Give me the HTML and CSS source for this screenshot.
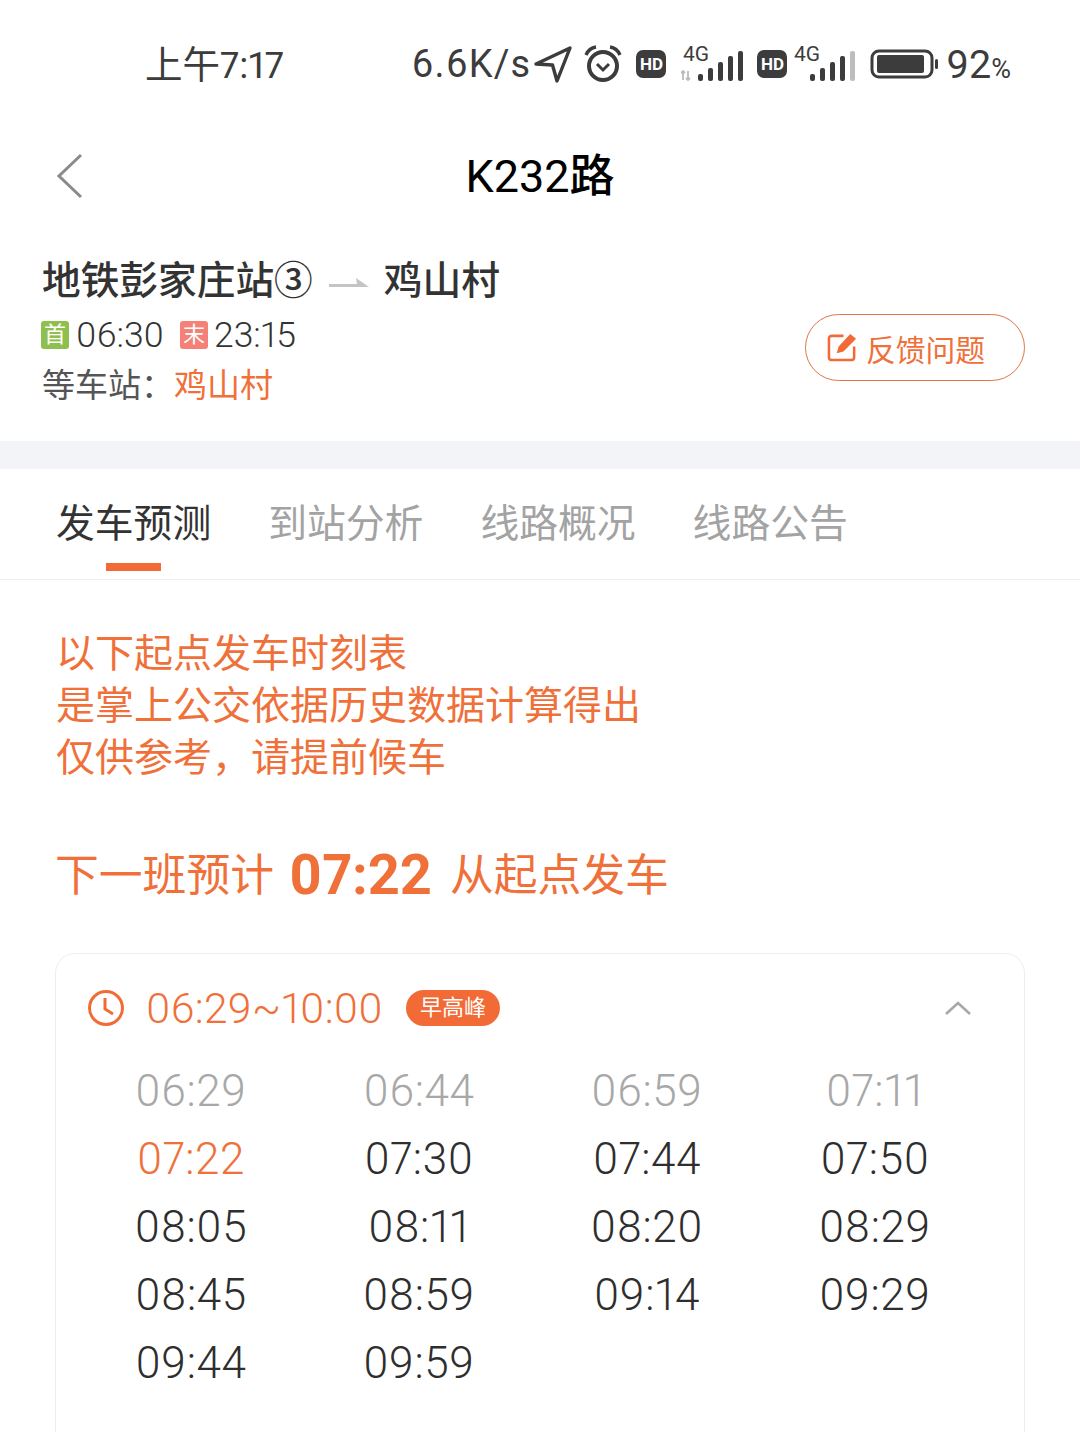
FILE: index.html
```html
<!DOCTYPE html>
<html lang="zh-CN">
<head>
    <meta charset="UTF-8">
    <meta name="viewport" content="width=device-width, initial-scale=1.0">
    <title>K232路</title>
    <link rel="stylesheet" href="styles.css">
</head>
<body>
    <div class="page">
        <div class="status-bar">
            <span class="clock">上午7:17</span>
            <div class="status-right">
                <span class="speed">6.6K/s</span>
                <svg class="ic-nav" width="40" height="40" viewBox="0 0 40 40"><path d="M3 20 L37 4 L24 37 L19.5 21 Z" fill="none" stroke="#3c3c3c" stroke-width="3.4" stroke-linejoin="round"/></svg>
                <svg class="ic-alarm" width="40" height="40" viewBox="0 0 40 40"><circle cx="20" cy="22" r="14" fill="none" stroke="#3c3c3c" stroke-width="4"/><path d="M14 20 L20 26 L26 20" fill="none" stroke="#3c3c3c" stroke-width="3"/><path d="M3 11 Q6 4 13 3 M37 11 Q34 4 27 3" fill="none" stroke="#3c3c3c" stroke-width="3.4"/></svg>
                <span class="hd hd-first">HD</span>
                <svg class="ic-signal" width="66" height="48" viewBox="0 -6 66 48"><text x="2" y="15" class="sig-text">4G</text><path d="M2 34 V25 M0 27 L2 25 L4 27 M7 25 V34 M5 32 L7 34 L9 32" stroke="#bbb" stroke-width="1.8" fill="none"/><rect x="17" y="28" width="5" height="7" rx="2" fill="#3c3c3c"/><rect x="27" y="22" width="5" height="13" rx="2" fill="#3c3c3c"/><rect x="37" y="16" width="5" height="19" rx="2" fill="#3c3c3c"/><rect x="47" y="10" width="5" height="25" rx="2" fill="#3c3c3c"/><rect x="57" y="5" width="5" height="30" rx="2" fill="#3c3c3c"/></svg>
                <span class="hd hd-second">HD</span>
                <svg class="ic-signal" width="62" height="48" viewBox="0 -6 62 48"><text x="0" y="15" class="sig-text">4G</text><rect x="16" y="28" width="5" height="7" rx="2" fill="#3c3c3c"/><rect x="26" y="22" width="5" height="13" rx="2" fill="#3c3c3c"/><rect x="36" y="16" width="5" height="19" rx="2" fill="#3c3c3c"/><rect x="46" y="10" width="5" height="25" rx="2" fill="#3c3c3c"/><rect x="56" y="5" width="5" height="30" rx="2" fill="#bdbdbd"/></svg>
                <svg class="ic-battery" width="70" height="32" viewBox="0 0 70 32"><rect x="2" y="3" width="60" height="26" rx="7" fill="none" stroke="#3c3c3c" stroke-width="3"/><rect x="7" y="7" width="47" height="18" rx="2" fill="#3c3c3c"/><rect x="65" y="11" width="3" height="10" rx="1.5" fill="#3c3c3c"/></svg>
                <span class="battery">92<small>%</small></span>
            </div>
        </div>

        <div class="nav-bar">
            <svg class="back" width="28" height="46" viewBox="0 0 28 46"><path d="M25 2 L3 23 L25 44" fill="none" stroke="#8a8a8a" stroke-width="3"/></svg>
            <h1>K232路</h1>
        </div>

        <div class="line-info">
            <div class="line-left">
                <div class="route">
                    <span>地铁彭家庄站③</span>
                    <svg class="route-arrow" width="42" height="14" viewBox="0 0 42 14"><path d="M1 11 H41 L28 2 L29 8 H1 Z" fill="#c4c4c4"/></svg>
                    <span>鸡山村</span>
                </div>
                <div class="times">
                    <span class="tag tag-first">首</span><span class="time">06:30</span>
                    <span class="tag tag-last">末</span><span class="time">23:15</span>
                </div>
                <div class="wait">等车站：<em>鸡山村</em></div>
            </div>
            <div class="feedback">
                <svg width="31" height="31" viewBox="0 0 32 32"><path d="M17 4 H5 Q2 4 2 7 V26 Q2 29 5 29 H25 Q28 29 28 26 V15" fill="none" stroke="#f26b36" stroke-width="2.6"/><path d="M10 22 L12 15 L24 2 L30 7 L17 20 Z" fill="#f26b36"/></svg>
                <span>反馈问题</span>
            </div>
        </div>

        <div class="divider"></div>

        <div class="tabs">
            <div class="tab active">发车预测</div>
            <div class="tab">到站分析</div>
            <div class="tab">线路概况</div>
            <div class="tab">线路公告</div>
        </div>

        <div class="content">
            <p class="notice">以下起点发车时刻表<br>是掌上公交依据历史数据计算得出<br>仅供参考，请提前候车</p>
            <div class="next">下一班预计<b>07:22</b>从起点发车</div>

            <div class="card">
                <div class="card-head">
                    <svg width="38" height="38" viewBox="0 0 38 38"><circle cx="19" cy="19" r="16.5" fill="none" stroke="#f26b36" stroke-width="3"/><path d="M18 9 V20 L26 25" fill="none" stroke="#f26b36" stroke-width="3"/></svg>
                    <span class="range">06:29~10:00</span>
                    <span class="peak">早高峰</span>
                    <svg class="fold" width="28" height="16" viewBox="0 0 28 16"><path d="M2 14 L14 3 L26 14" fill="none" stroke="#a8a8a8" stroke-width="2.6"/></svg>
                </div>
                <div class="grid">
                    <span class="past">06:29</span><span class="past">06:44</span><span class="past">06:59</span><span class="past">07:11</span>
                    <span class="now">07:22</span><span>07:30</span><span>07:44</span><span>07:50</span>
                    <span>08:05</span><span>08:11</span><span>08:20</span><span>08:29</span>
                    <span>08:45</span><span>08:59</span><span>09:14</span><span>09:29</span>
                    <span>09:44</span><span>09:59</span>
                </div>
            </div>
        </div>
    </div>
</body>
</html>
```

FILE: styles.css
```css
html, body {
    margin: 0;
    padding: 0;
    background-color: #ffffff;
}
.page {
    width: 1080px;
    height: 1432px;
    overflow: hidden;
    font-family: Roboto, "Noto Sans CJK SC", sans-serif;
    font-variant-numeric: proportional-nums;
    color: #333333;
}
.status-bar {
    height: 128px;
    display: flex;
    align-items: center;
    padding: 0 69px 0 145px;
    color: #3c3c3c;
    box-sizing: border-box;
}
.clock {
    font-size: 37.5px;
    margin-bottom: 6px;
}
.status-right {
    margin-left: auto;
    display: flex;
    align-items: center;
}
.speed {
    font-size: 38px;
    letter-spacing: 1.2px;
}
.battery {
    font-size: 39.5px;
    margin-left: 6px;
}
.battery small {
    font-size: 27px;
}
.ic-nav {
    margin-left: 2px;
}
.ic-alarm {
    margin-left: 10px;
}
.hd {
    width: 30px;
    height: 28px;
    border-radius: 7px;
    background-color: #3c3c3c;
    color: #ffffff;
    font-size: 17px;
    font-weight: 700;
    line-height: 28px;
    text-align: center;
}
.hd-first {
    margin-left: 13px;
}
.hd-second {
    margin-left: 10px;
}
.ic-signal {
    margin-left: 15px;
}
.hd-second + .ic-signal {
    margin-left: 7px;
}
.sig-text {
    font-family: Roboto, sans-serif;
    font-size: 21px;
    fill: #3c3c3c;
}
.ic-battery {
    margin-left: 14px;
}
.nav-bar {
    height: 96px;
    display: flex;
    align-items: center;
    justify-content: center;
    position: relative;
}
.nav-bar h1 {
    margin: 0 0 8px;
    font-size: 45px;
    font-weight: 450;
    color: #000000;
}
.back {
    position: absolute;
    left: 56px;
    top: 25px;
}
.line-info {
    height: 217px;
    padding: 34px 55px 0 42px;
    box-sizing: border-box;
    display: flex;
    justify-content: space-between;
}
.route {
    display: flex;
    align-items: center;
    font-size: 38.7px;
    line-height: 46px;
    font-weight: 500;
    color: #333333;
}
.route-arrow {
    margin: 4px 14px 0 15px;
}
.times {
    display: flex;
    align-items: center;
    margin-top: 7px;
    margin-left: -1px;
    font-size: 35.5px;
    font-weight: 300;
    line-height: 48px;
    color: #333333;
}
.tag {
    width: 28px;
    height: 28px;
    border-radius: 3px;
    color: #ffffff;
    font-size: 22px;
    font-weight: 400;
    line-height: 28px;
    text-align: center;
    margin-right: 7px;
}
.tag-first {
    background-color: #8fbf4d;
}
.tag-last {
    background-color: #f58078;
    margin-left: 16px;
    margin-right: 6px;
}
.wait {
    margin-top: 4px;
    font-size: 33px;
    line-height: 46px;
    color: #555555;
}
.wait em {
    font-style: normal;
    color: #ef7038;
}
.feedback {
    width: 220px;
    height: 67px;
    margin-top: 56px;
    padding-right: 18px;
    border: 1px solid #e0764a;
    border-radius: 34px;
    box-sizing: border-box;
    display: flex;
    align-items: center;
    justify-content: center;
    gap: 8px;
    font-size: 29.8px;
    color: #ef7038;
}
.divider {
    height: 28px;
    background-color: #f3f4f8;
}
.tabs {
    height: 111px;
    padding: 0 56px;
    box-sizing: border-box;
    display: flex;
    gap: 57px;
    border-bottom: 1px solid #eeeeee;
}
.tab {
    position: relative;
    font-size: 38.8px;
    line-height: 110px;
    color: #a3a3a3;
}
.tab.active {
    color: #333333;
}
.tab.active::after {
    content: "";
    position: absolute;
    left: 50px;
    bottom: 8px;
    width: 55px;
    height: 8px;
    background-color: #f26b36;
}
.content {
    padding: 48px 55px 0;
}
.notice {
    margin: 0 0 0 1px;
    font-size: 39px;
    line-height: 52px;
    color: #f0703a;
}
.next {
    margin: 56px 0 0;
    display: flex;
    align-items: center;
    height: 64px;
    font-size: 43.8px;
    color: #f0703a;
}
.next b {
    font-size: 56px;
    font-weight: 700;
    margin: 6px 18px 0 15px;
}
.card {
    margin-top: 49px;
    height: 520px;
    border: 1px solid #eeeeee;
    border-radius: 20px;
    box-sizing: border-box;
    padding: 0 52px 0 31px;
}
.card-head {
    height: 108px;
    display: flex;
    align-items: center;
    color: #f0703a;
}
.range {
    font-size: 42.5px;
    font-weight: 300;
    letter-spacing: 0.2px;
    margin-left: 21px;
}
.peak {
    margin-left: 23px;
    width: 94px;
    height: 36px;
    border-radius: 18px;
    background-color: #f26b36;
    color: #ffffff;
    font-size: 22px;
    line-height: 36px;
    text-align: center;
}
.fold {
    margin-left: auto;
}
.grid {
    margin: -5px -52px 0 -31px;
    padding-left: 21px;
    display: grid;
    grid-template-columns: repeat(4, 228px);
    grid-auto-rows: 68px;
    font-size: 44px;
    font-weight: 300;
    letter-spacing: 0.6px;
    line-height: 68px;
    text-align: center;
    color: #2e2e2e;
}
.past {
    color: #a8a8a8;
}
.now {
    color: #f0703a;
}
```
